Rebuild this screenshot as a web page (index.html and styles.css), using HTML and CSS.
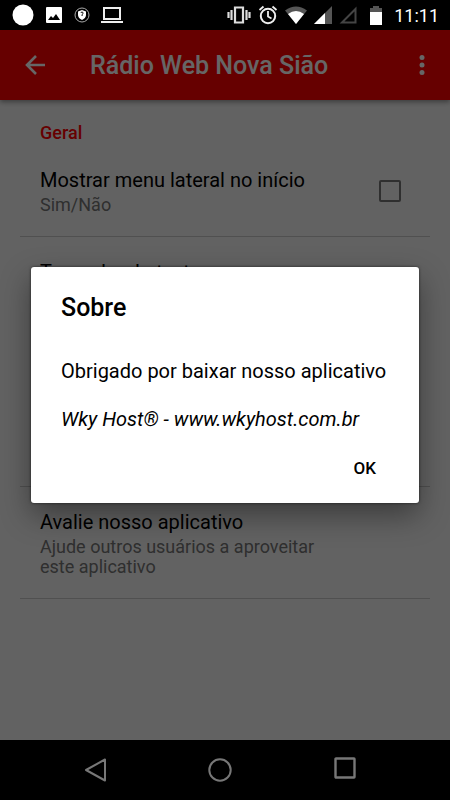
FILE: index.html
```html
<!DOCTYPE html>
<html lang="pt-BR">
<head>
    <meta charset="UTF-8">
    <meta name="viewport" content="width=device-width, initial-scale=1">
    <title>Rádio Web Nova Sião</title>
    <link rel="stylesheet" href="styles.css">
</head>
<body>

<div class="status-bar">
    <div class="status-icons">
        <svg width="22" height="22" viewBox="0 0 22 22"><circle cx="11" cy="11" r="10.5" fill="#fff"/></svg>
        <svg width="18" height="18" viewBox="0 0 18 18"><path fill="#fff" fill-rule="evenodd" d="M2 1h14a1 1 0 0 1 1 1v14a1 1 0 0 1-1 1H2a1 1 0 0 1-1-1V2a1 1 0 0 1 1-1zM3 14h12l-4-6-3 4-2-2z"/></svg>
        <svg width="16" height="16" viewBox="0 0 16 16"><circle cx="8" cy="8" r="7" fill="none" stroke="#aaa"/><path fill="#fff" d="M8 3l4 1.500v3.500c0 2-1.700 4-4 5-2.300-1-4-3-4-5V4.500z"/><path d="M7 6a1 1 0 1 1 2 0c0 1-1 1-1 3" fill="none" stroke="#000"/></svg>
        <svg width="22" height="18" viewBox="0 0 22 18"><path d="M3 2h16v11H3zM0 16h22" fill="none" stroke="#eee" stroke-width="2"/></svg>
    </div>
    <div class="status-icons status-right">
        <svg width="24" height="20" viewBox="0 0 24 20"><path d="M8 2.500h8v15H8zM4.500 5v10M19.500 5v10M1.500 7v6M22.500 7v6" fill="none" stroke="#ddd" stroke-width="2.200"/></svg>
        <svg width="20" height="20" viewBox="0 0 20 20"><path d="M1.500 5l4-3.500M18.500 5l-4-3.500M10 6v5.500l3.500 2" fill="none" stroke="#eee" stroke-width="1.800"/><circle cx="10" cy="11" r="7.200" fill="none" stroke="#eee" stroke-width="2"/></svg>
        <svg width="22" height="20" viewBox="0 0 22 20"><path fill="#555" d="M0 5.500q11-8 22 0L11 19z"/><path fill="#fff" d="M3 9q8-6 16 0l-8 10z"/></svg>
        <svg width="18" height="18" viewBox="0 0 18 18"><path fill="#555" d="M18 0v18H0z"/><path fill="#fff" d="M11 7v11H0z"/></svg>
        <svg width="18" height="18" viewBox="0 0 18 18"><path d="M16.500 3v13.500H3z" fill="none" stroke="#444" stroke-width="2"/></svg>
        <svg class="battery" width="12" height="19" viewBox="0 0 12 19"><path fill="#555" d="M0 2h3V0h6v2h3v4H0z"/><path fill="#fff" d="M0 6h12v13H0z"/></svg>
        <span class="clock">11:11</span>
    </div>
</div>

<div class="app">
    <header class="toolbar">
        <button class="icon-button" type="button" aria-label="Voltar">
            <svg width="20" height="20" viewBox="0 0 20 20"><path d="M20 10H2M11 1l-9 9 9 9" fill="none" stroke="#fff" stroke-width="2.600"/></svg>
        </button>
        <h1>Rádio Web Nova Sião</h1>
        <button class="icon-button" type="button" aria-label="Mais opções">
            <svg width="6" height="20" viewBox="0 0 6 20"><g fill="#fff"><circle cx="3" cy="2.500" r="2.500"/><circle cx="3" cy="10" r="2.500"/><circle cx="3" cy="17.500" r="2.500"/></g></svg>
        </button>
    </header>

    <main class="settings">
        <h2>Geral</h2>
        <div class="setting">
            <label class="setting-text" for="menuLateral">
                <span class="setting-title">Mostrar menu lateral no início</span>
                <span class="setting-summary">Sim/Não</span>
            </label>
            <input type="checkbox" id="menuLateral">
        </div>
        <div class="setting setting-tall">
            <div class="setting-text">
                <span class="setting-title">Tamanho do texto</span>
            </div>
        </div>
        <div class="setting">
            <div class="setting-text">
                <span class="setting-title">Avalie nosso aplicativo</span>
                <span class="setting-summary">Ajude outros usuários a aproveitar este aplicativo</span>
            </div>
        </div>
    </main>

    <div class="scrim">
        <section class="dialog" role="dialog" aria-modal="true" aria-labelledby="dialogTitle">
            <h2 id="dialogTitle">Sobre</h2>
            <p>Obrigado por baixar nosso aplicativo</p>
            <p><em>Wky Host® - www.wkyhost.com.br</em></p>
            <div class="dialog-actions">
                <button type="button">OK</button>
            </div>
        </section>
    </div>
</div>

<nav class="nav-bar">
    <button type="button" aria-label="Voltar">
        <svg width="24" height="24" viewBox="0 0 24 24"><path d="M22 1.500v21L3 12z" fill="none" stroke="#777" stroke-width="2" stroke-linejoin="round"/></svg>
    </button>
    <button type="button" aria-label="Início">
        <svg width="24" height="24" viewBox="0 0 24 24"><circle cx="12" cy="12" r="10.700" fill="none" stroke="#777" stroke-width="2"/></svg>
    </button>
    <button type="button" aria-label="Recentes">
        <svg width="24" height="28" viewBox="0 0 24 28"><rect x="2.500" y="2.500" width="19" height="19" rx="0.500" fill="none" stroke="#777" stroke-width="2.400"/></svg>
    </button>
</nav>

</body>
</html>
```

FILE: styles.css
```css
* {
    box-sizing: border-box;
}
body {
    display: flex;
    flex-direction: column;
    min-height: 100vh;
    margin: 0;
    background: #000;
    color: #000;
    font-family: Roboto, sans-serif;
    font-size: 20px;
}
h1, h2, p {
    margin: 0;
}
button {
    padding: 0;
    border: none;
    background: none;
    font-family: inherit;
    cursor: pointer;
}
svg {
    display: block;
}

/* status bar */
.status-bar {
    display: flex;
    justify-content: space-between;
    align-items: center;
    height: 30px;
    padding: 0 11px 0 12px;
}
.status-icons {
    display: flex;
    align-items: center;
    gap: 11px;
}
.status-right {
    gap: 7px;
}
.battery {
    margin-left: 6px;
}
.clock {
    margin-left: 5px;
    color: #fff;
    font-size: 18px;
}

/* app */
.app {
    position: relative;
    flex: 1;
    background: #f5f5f5;
}
.toolbar {
    display: flex;
    align-items: center;
    height: 70px;
    padding: 0 10px 0 20px;
    background: #f00;
    box-shadow: 0 2px 5px rgba(0, 0, 0, 0.4);
}
.toolbar h1 {
    flex: 1;
    padding-left: 40px;
    color: #fff;
    font-size: 25px;
    font-weight: 500;
}
.icon-button {
    display: flex;
    justify-content: center;
    align-items: center;
    width: 30px;
    height: 40px;
}
.toolbar .icon-button:last-child {
    width: 36px;
}
.settings {
    padding: 21px 20px 0;
}
.settings h2 {
    padding: 0 20px;
    color: #f00;
    font-size: 18px;
    font-weight: 500;
    line-height: 24px;
}
.setting {
    display: flex;
    align-items: center;
    padding: 21px 20px;
    border-bottom: 1px solid #c8c8c8;
}
.setting-tall {
    align-items: flex-start;
    min-height: 250px;
}
.setting-text {
    flex: 1;
}
.setting-title,
.setting-summary {
    display: block;
}
.setting-title {
    line-height: 28px;
}
.setting-summary {
    max-width: 290px;
    margin-top: 1px;
    color: #757575;
    font-size: 18px;
    line-height: 20px;
}
.setting input {
    appearance: none;
    width: 22px;
    height: 22px;
    margin: 0 9px;
    border: 2px solid #757575;
    border-radius: 2px;
}

/* dialog */
.scrim {
    position: absolute;
    inset: 0;
    display: flex;
    justify-content: center;
    align-items: center;
    padding: 0 31px;
    background: rgba(0, 0, 0, 0.6);
}
.dialog {
    width: 100%;
    max-width: 520px;
    padding: 24px 30px 20px;
    border-radius: 3px;
    background: #fff;
    box-shadow: 0 12px 30px rgba(0, 0, 0, 0.4), 0 0 3px rgba(0, 0, 0, 0.6);
}
.dialog h2 {
    margin-bottom: 32px;
    font-size: 25px;
    font-weight: 500;
    line-height: 34px;
}
.dialog p {
    margin-bottom: 20px;
    line-height: 28px;
}
.dialog-actions {
    display: flex;
    justify-content: flex-end;
}
.dialog-actions button {
    padding: 3px 13px;
    font-size: 17px;
    font-weight: 500;
    line-height: 24px;
}

/* navigation */
.nav-bar {
    display: flex;
    justify-content: center;
    align-items: center;
    gap: 101px;
    height: 60px;
    padding-right: 11px;
}
```
